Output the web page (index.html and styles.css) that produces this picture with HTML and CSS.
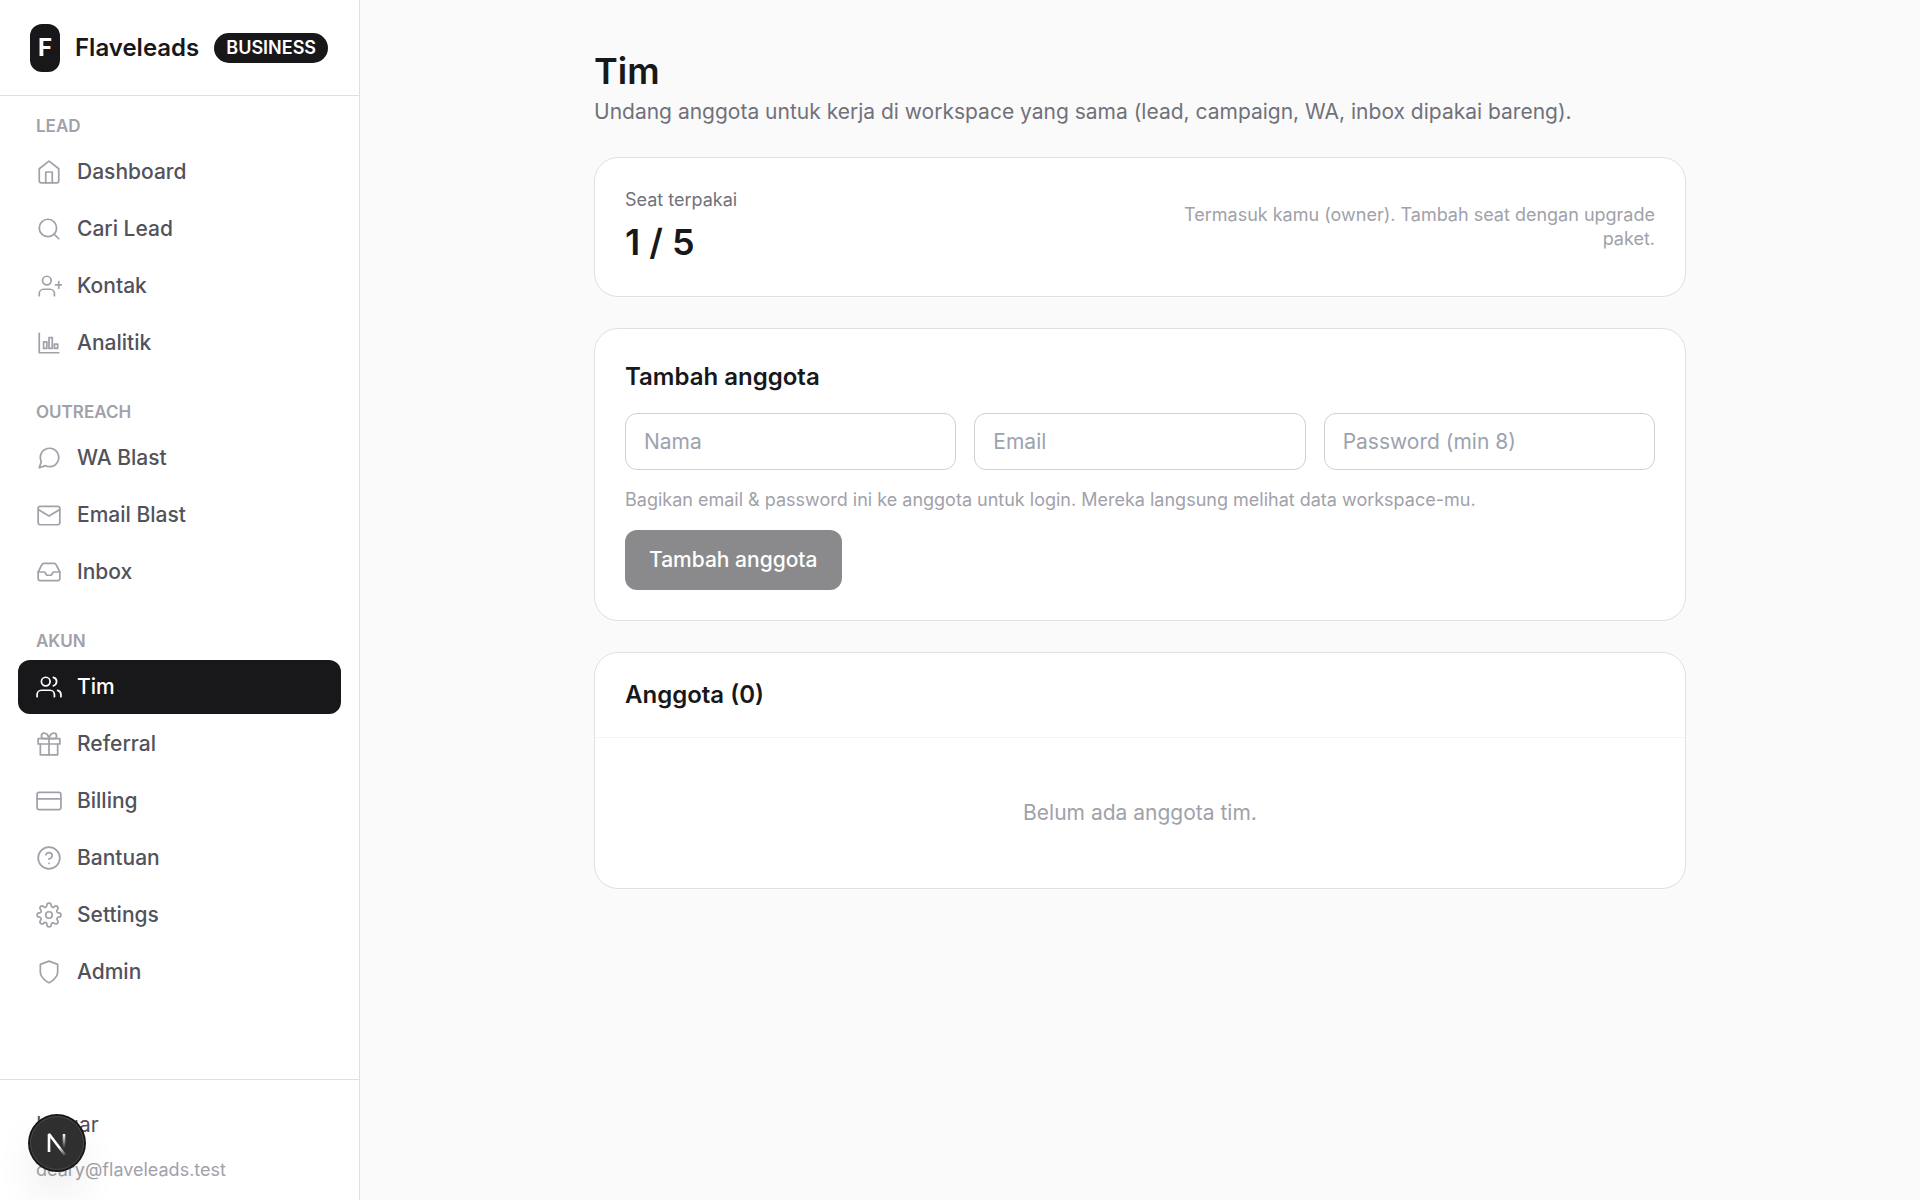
FILE: index.html
```html
<!DOCTYPE html>
<html lang="id">
<head>
<meta charset="utf-8">
<meta name="viewport" content="width=device-width, initial-scale=1">
<title>Tim - Flaveleads</title>
<link rel="stylesheet" href="styles.css">
</head>
<body>
<div class="app">
  <aside class="sidebar">
    <div class="brand">
      <span class="brand-mark">F</span>
      <span class="brand-name">Flaveleads</span>
      <span class="plan">BUSINESS</span>
    </div>
    <nav class="nav">
      <section class="nav-group">
        <h2 class="nav-label">LEAD</h2>
        <a class="nav-item" href="#"><svg class="icon" viewBox="0 0 24 24"><path d="M3 9l9-7 9 7v11a2 2 0 0 1-2 2H5a2 2 0 0 1-2-2z"/><path d="M9 22V12h6v10"/></svg>Dashboard</a>
        <a class="nav-item" href="#"><svg class="icon" viewBox="0 0 24 24"><circle cx="11" cy="11" r="8"/><path d="M21 21l-4.35-4.35"/></svg>Cari Lead</a>
        <a class="nav-item" href="#"><svg class="icon" viewBox="0 0 24 24"><path d="M17 21v-2a4 4 0 0 0-4-4H7a4 4 0 0 0-4 4v2"/><circle cx="10" cy="7" r="4"/><path d="M21 8v6M18 11h6"/></svg>Kontak</a>
        <a class="nav-item" href="#"><svg class="icon" viewBox="0 0 24 24"><path d="M3 3v18h18"/><rect x="7" y="11" width="3" height="6"/><rect x="12" y="7" width="3" height="10"/><rect x="17" y="13" width="3" height="4"/></svg>Analitik</a>
      </section>
      <section class="nav-group">
        <h2 class="nav-label">OUTREACH</h2>
        <a class="nav-item" href="#"><svg class="icon" viewBox="0 0 24 24"><path d="M21 11.5a8.38 8.38 0 0 1-.9 3.8 8.5 8.5 0 0 1-7.6 4.7 8.38 8.38 0 0 1-3.8-.9L3 21l1.9-5.7a8.38 8.38 0 0 1-.9-3.8 8.5 8.5 0 0 1 4.7-7.6 8.38 8.38 0 0 1 3.8-.9h.5a8.48 8.48 0 0 1 8 8v.5z"/></svg>WA Blast</a>
        <a class="nav-item" href="#"><svg class="icon" viewBox="0 0 24 24"><rect x="2" y="4" width="20" height="17" rx="2"/><path d="M2 7l10 6 10-6"/></svg>Email Blast</a>
        <a class="nav-item" href="#"><svg class="icon" viewBox="0 0 24 24"><path d="M22 12h-6l-2 3h-4l-2-3H2"/><path d="M5.45 5.11L2 12v6a2 2 0 0 0 2 2h16a2 2 0 0 0 2-2v-6l-3.45-6.89A2 2 0 0 0 16.76 4H7.24a2 2 0 0 0-1.79 1.11z"/></svg>Inbox</a>
      </section>
      <section class="nav-group">
        <h2 class="nav-label">AKUN</h2>
        <a class="nav-item active" href="#" aria-current="page"><svg class="icon" viewBox="0 0 24 24"><path d="M17 21v-2a4 4 0 0 0-4-4H5a4 4 0 0 0-4 4v2"/><circle cx="9" cy="7" r="4"/><path d="M23 21v-2a4 4 0 0 0-3-3.87M16 3.13a4 4 0 0 1 0 7.75"/></svg>Tim</a>
        <a class="nav-item" href="#"><svg class="icon" viewBox="0 0 24 24"><path d="M20 12v10H4V12"/><rect x="2" y="7" width="20" height="5"/><path d="M12 22V7M12 7H7.5a2.5 2.5 0 0 1 0-5C11 2 12 7 12 7zM12 7h4.5a2.5 2.5 0 0 0 0-5C13 2 12 7 12 7z"/></svg>Referral</a>
        <a class="nav-item" href="#"><svg class="icon" viewBox="0 0 24 24"><rect x="1" y="4" width="22" height="16" rx="2"/><path d="M1 10h22"/></svg>Billing</a>
        <a class="nav-item" href="#"><svg class="icon" viewBox="0 0 24 24"><circle cx="12" cy="12" r="10"/><path d="M9.09 9a3 3 0 0 1 5.83 1c0 2-3 3-3 3M12 17h.01"/></svg>Bantuan</a>
        <a class="nav-item" href="#"><svg class="icon" viewBox="0 0 24 24"><circle cx="12" cy="12" r="3"/><path d="M19.4 15a1.65 1.65 0 0 0 .33 1.82l.06.06a2 2 0 1 1-2.83 2.83l-.06-.06a1.65 1.65 0 0 0-2.8 1.17V21a2 2 0 1 1-4 0v-.09A1.65 1.65 0 0 0 7.1 19.65l-.06.06a2 2 0 1 1-2.83-2.83l.06-.06A1.65 1.65 0 0 0 3.09 14H3a2 2 0 1 1 0-4h.09A1.65 1.65 0 0 0 4.27 7.1l-.06-.06a2 2 0 1 1 2.83-2.83l.06.06A1.65 1.65 0 0 0 10 3.09V3a2 2 0 1 1 4 0v.09a1.65 1.65 0 0 0 2.9 1.18l.06-.06a2 2 0 1 1 2.83 2.83l-.06.06A1.65 1.65 0 0 0 20.91 10H21a2 2 0 1 1 0 4h-.09a1.65 1.65 0 0 0-1.51 1z"/></svg>Settings</a>
        <a class="nav-item" href="#"><svg class="icon" viewBox="0 0 24 24"><path d="M12 22s8-4 8-10V5l-8-3-8 3v7c0 6 8 10 8 10z"/></svg>Admin</a>
      </section>
    </nav>
    <div class="account">
      <button class="logout" type="button">Keluar</button>
      <p class="account-email">deary@flaveleads.test</p>
    </div>
  </aside>

  <main class="main">
    <div class="content">
      <header class="page-head">
        <h1 class="page-title">Tim</h1>
        <p class="page-sub">Undang anggota untuk kerja di workspace yang sama (lead, campaign, WA, inbox dipakai bareng).</p>
      </header>

      <section class="card seats">
        <div class="seat-count">
          <p class="seat-label">Seat terpakai</p>
          <p class="seat-value">1 / 5</p>
        </div>
        <p class="seat-note">Termasuk kamu (owner). Tambah seat dengan upgrade paket.</p>
      </section>

      <form class="card add-form">
        <h2 class="card-title">Tambah anggota</h2>
        <div class="fields">
          <input class="field" type="text" placeholder="Nama" aria-label="Nama">
          <input class="field" type="email" placeholder="Email" aria-label="Email">
          <input class="field" type="text" placeholder="Password (min 8)" aria-label="Password (min 8)">
        </div>
        <p class="hint">Bagikan email &amp; password ini ke anggota untuk login. Mereka langsung melihat data workspace-mu.</p>
        <button class="submit" type="submit" disabled>Tambah anggota</button>
      </form>

      <section class="card members">
        <div class="members-head"><h2 class="card-title">Anggota (0)</h2></div>
        <p class="empty">Belum ada anggota tim.</p>
      </section>
    </div>
  </main>
</div>

<button class="devtools" type="button" aria-label="Open Next.js Dev Tools">
  <svg class="devtools-mark" viewBox="0 0 54 54" fill="none">
    <defs>
      <linearGradient id="diag" gradientUnits="userSpaceOnUse" x1="29" y1="31" x2="36" y2="40"><stop stop-color="#fff"/><stop offset="1" stop-color="#fff" stop-opacity="0"/></linearGradient>
      <linearGradient id="stem" gradientUnits="userSpaceOnUse" x1="34" y1="18" x2="34" y2="32"><stop stop-color="#fff"/><stop offset="1" stop-color="#fff" stop-opacity="0"/></linearGradient>
    </defs>
    <path d="M19 36V18L35 39" stroke="url(#diag)" stroke-width="2.6" stroke-linejoin="bevel"/>
    <path d="M34 18v14" stroke="url(#stem)" stroke-width="2.6"/>
  </svg>
</button>
</body>
</html>
```
FILE: styles.css
```css
*, *::before, *::after { box-sizing: border-box; }

body {
  margin: 0;
  background: #fafafa;
  color: #18181b;
  font-family: Inter, "Liberation Sans", sans-serif;
  font-size: 21px;
  line-height: 30px;
}

h1, h2, p { margin: 0; }
button, input { font: inherit; }

.app { display: flex; min-height: 100vh; }

/* Sidebar */
.sidebar {
  position: sticky;
  top: 0;
  display: flex;
  flex-direction: column;
  flex: none;
  width: 360px;
  height: 100vh;
  background: #fff;
  border-right: 1px solid #e0e0e3;
}

.brand {
  display: flex;
  align-items: center;
  gap: 15px;
  padding: 24px 30px 23px;
  border-bottom: 1px solid #e0e0e3;
}

.brand-mark {
  display: grid;
  place-items: center;
  width: 30px;
  height: 48px;
  border-radius: 12px;
  background: #18181b;
  color: #fff;
  font-size: 24px;
  font-weight: 700;
}

.brand-name { font-size: 24px; font-weight: 600; line-height: 36px; }

.plan {
  padding: 3px 12px;
  border-radius: 15px;
  background: #18181b;
  color: #fff;
  font-size: 18px;
  font-weight: 600;
  line-height: 24px;
}

.nav {
  display: flex;
  flex: 1;
  flex-direction: column;
  gap: 30px;
  min-height: 0;
  padding: 18px;
  overflow: hidden;
}

.nav-group { display: flex; flex-direction: column; gap: 3px; }

.nav-label {
  margin-bottom: 4px;
  padding: 0 18px;
  color: #a1a1aa;
  font-size: 17px;
  font-weight: 600;
  line-height: 24px;
}

.nav-item {
  display: flex;
  align-items: center;
  gap: 15px;
  padding: 12px 18px;
  border-radius: 12px;
  color: #52525b;
  font-weight: 500;
  text-decoration: none;
}

.icon {
  flex: none;
  width: 26px;
  height: 26px;
  fill: none;
  stroke: #a1a1aa;
  stroke-width: 1.6;
  stroke-linecap: round;
  stroke-linejoin: round;
}

.active { background: #18181b; color: #fff; }
.active .icon { stroke: #fff; }

.account { padding: 18px; border-top: 1px solid #e0e0e3; }

.logout {
  display: block;
  width: 100%;
  padding: 12px 18px;
  border: 0;
  background: none;
  color: #52525b;
  text-align: left;
}

.account-email {
  margin-top: 6px;
  padding: 0 18px;
  color: #a1a1aa;
  font-size: 18px;
  line-height: 24px;
}

/* Main column */
.main { flex: 1; min-width: 0; }

.content {
  display: flex;
  flex-direction: column;
  gap: 31px;
  max-width: 1152px;
  margin: 0 auto;
  padding: 47px 30px;
}

.page-title { font-size: 36px; font-weight: 600; line-height: 48px; }
.page-sub { margin-top: 3px; color: #71717a; line-height: 28px; }

.card {
  background: #fff;
  border: 1px solid #e0e0e3;
  border-radius: 24px;
}

.card-title { font-size: 24px; font-weight: 600; line-height: 36px; }

.seats {
  display: flex;
  align-items: center;
  justify-content: space-between;
  gap: 30px;
  padding: 30px;
}

.seat-count { display: flex; flex-direction: column; gap: 6px; }
.seat-label { color: #71717a; font-size: 18px; line-height: 24px; }
.seat-value { font-size: 36px; font-weight: 600; line-height: 48px; }

.seat-note {
  max-width: 480px;
  color: #a1a1aa;
  font-size: 18px;
  line-height: 24px;
  text-align: right;
}

.add-form {
  display: flex;
  flex-direction: column;
  align-items: flex-start;
  gap: 18px;
  padding: 30px;
}

.fields {
  display: grid;
  grid-template-columns: repeat(3, minmax(0, 1fr));
  gap: 18px;
  width: 100%;
}

.field {
  width: 100%;
  height: 57px;
  padding: 12px 18px;
  border: 1px solid #cfcfd4;
  border-radius: 12px;
  background: #fff;
  color: #18181b;
}

.field::placeholder { color: #9ca3af; opacity: 1; }

.hint { color: #a1a1aa; font-size: 18px; line-height: 24px; }

.submit {
  padding: 15px 24px;
  border: 0;
  border-radius: 12px;
  background: #18181b;
  color: #fff;
  font-weight: 500;
  opacity: 0.5;
}

.members-head { padding: 24px 30px; border-bottom: 1px solid #f4f4f5; }
.empty { padding: 60px 30px; color: #a1a1aa; text-align: center; }

/* Floating dev tools badge */
.devtools {
  position: fixed;
  bottom: 30px;
  left: 30px;
  width: 54px;
  height: 54px;
  padding: 0;
  border: 0;
  border-radius: 50%;
  background: #2f2f2f;
  box-shadow: 0 0 0 2px #171717, inset 0 0 0 1px #484848, 0 24px 48px -12px rgba(0, 0, 0, 0.24);
}

.devtools-mark { display: block; width: 54px; height: 54px; }
```
